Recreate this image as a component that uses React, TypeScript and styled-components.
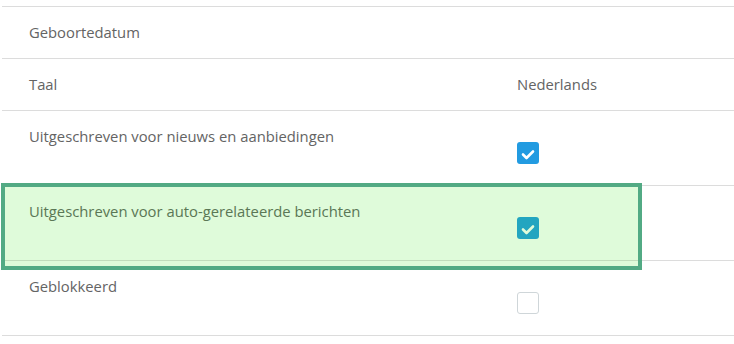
import React from 'react';
import styled, { createGlobalStyle } from 'styled-components';

const GlobalStyle = createGlobalStyle`
  html, body {
    margin: 0;
    padding: 0;
    background: #fff;
    overflow: hidden;
  }
  body {
    font-family: 'Open Sans', 'Noto Sans', sans-serif;
  }
`;

const Page = styled.div`
  position: relative;
  padding: 6px 0 0 2px;
  width: 760px;
`;

const Table = styled.div`
  display: flex;
  flex-direction: column;
  border-bottom: 1px solid #dcdcdc;
`;

const Row = styled.div`
  display: grid;
  grid-template-columns: 488px 1fr;
  border-top: 1px solid #dcdcdc;
`;

const LabelCell = styled.div`
  padding: 15px 27px;
  font-size: 14.8px;
  line-height: 21px;
  color: #646464;
`;

const ValueCell = styled.div<{ check?: boolean }>`
  padding: ${({ check }) => (check ? '31px 27px 21px' : '15px 27px')};
  font-size: 14.8px;
  line-height: 21px;
  color: #646464;
`;

const Box = styled.div<{ checked?: boolean }>`
  width: 22px;
  height: 22px;
  box-sizing: border-box;
  border-radius: 3px;
  background: ${({ checked }) => (checked ? '#229be1' : '#fff')};
  border: ${({ checked }) => (checked ? 'none' : '1px solid #cfd6d9')};
  display: flex;
  align-items: center;
  justify-content: center;
`;

const Highlight = styled.div`
  position: absolute;
  left: 1px;
  top: 183px;
  width: 641px;
  height: 87px;
  box-sizing: border-box;
  border: 4px solid #52aa84;
  background: rgba(40, 225, 10, 0.15);
  pointer-events: none;
`;

const Checkbox = ({ checked }: { checked?: boolean }) => (
  <Box checked={checked}>
    {checked && (
      <svg width="22" height="22" viewBox="0 0 22 22">
        <path d="M6 12.5l3.5 3.5L16 9.5" fill="none" stroke="#fff" strokeWidth="2.6" strokeLinecap="round" strokeLinejoin="round" />
      </svg>
    )}
  </Box>
);

const rows: { label: string; value?: string; checked?: boolean }[] = [
  { label: 'Geboortedatum', value: '' },
  { label: 'Taal', value: 'Nederlands' },
  { label: 'Uitgeschreven voor nieuws en aanbiedingen', checked: true },
  { label: 'Uitgeschreven voor auto-gerelateerde berichten', checked: true },
  { label: 'Geblokkeerd', checked: false },
];

export default function App() {
  return (
    <>
      <GlobalStyle />
      <Page>
        <Table>
          {rows.map((r) => (
            <Row key={r.label}>
              <LabelCell>{r.label}</LabelCell>
              {r.value !== undefined ? (
                <ValueCell>{r.value}</ValueCell>
              ) : (
                <ValueCell check>
                  <Checkbox checked={r.checked} />
                </ValueCell>
              )}
            </Row>
          ))}
        </Table>
        <Highlight />
      </Page>
    </>
  );
}
